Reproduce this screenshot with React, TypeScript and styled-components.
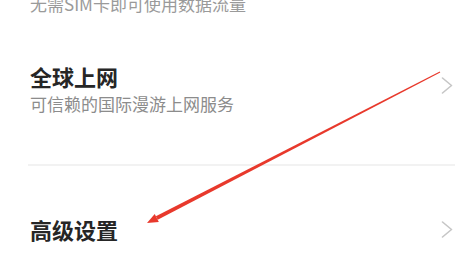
import React from "react";
import styled, { createGlobalStyle } from "styled-components";

const GlobalStyle = createGlobalStyle`
  html, body {
    margin: 0;
    padding: 0;
    background: #ffffff;
  }
  body {
    font-family: "Noto Sans CJK SC", "Noto Sans", sans-serif;
  }
`;

const Screen = styled.div`
  position: relative;
  width: 466px;
  height: 261px;
  overflow: hidden;
  background: #ffffff;
`;

const List = styled.div`
  display: flex;
  flex-direction: column;
`;

const TopDesc = styled.p`
  margin: -7px 0 0 30px;
  font-size: 17px;
  line-height: 22px;
  color: #9a9a9a;
`;

const Row = styled.div<{ $pad: string }>`
  display: flex;
  align-items: center;
  justify-content: space-between;
  padding: ${(p) => p.$pad};
  padding-left: 30px;
  padding-right: 13px;
`;

const Texts = styled.div`
  display: flex;
  flex-direction: column;
  gap: 2px;
`;

const Title = styled.div`
  font-size: 22px;
  line-height: 30px;
  font-weight: 700;
  color: #262626;
`;

const Subtitle = styled.div`
  font-size: 17px;
  line-height: 22px;
  color: #8c8c8c;
`;

const Divider = styled.div`
  height: 2px;
  margin: 0 11px 0 28px;
  background: #f2f2f2;
`;

const ChevronIcon = styled.svg<{ $shift: number }>`
  display: block;
  flex: none;
  margin-top: ${(p) => p.$shift}px;
`;

const Chevron = ({ shift = 0 }: { shift?: number }) => (
  <ChevronIcon $shift={shift} width="12" height="17" viewBox="0 0 12 17">
    <polyline
      points="1.5,1 10.5,8.5 1.5,16"
      fill="none"
      stroke="#c6c6c6"
      strokeWidth="1.6"
      strokeLinecap="round"
      strokeLinejoin="round"
    />
  </ChevronIcon>
);

const ArrowLayer = styled.svg`
  position: absolute;
  left: 0;
  top: 0;
  pointer-events: none;
`;

// annotation arrow drawn over the list
const Arrow = () => {
  const start = { x: 440, y: 72 };
  const tip = { x: 147, y: 223 };
  const dx = tip.x - start.x;
  const dy = tip.y - start.y;
  const len = Math.hypot(dx, dy);
  const u = { x: dx / len, y: dy / len };
  const n = { x: -u.y, y: u.x };
  const headLen = 11;
  const base = { x: tip.x - u.x * headLen, y: tip.y - u.y * headLen };
  const pt = (p: { x: number; y: number }, w: number) =>
    `${(p.x + n.x * w).toFixed(2)},${(p.y + n.y * w).toFixed(2)}`;
  const shaft = [pt(start, 0.5), pt(base, 2), pt(base, -2), pt(start, -0.5)].join(" ");
  const head = [pt(base, 4.5), `${tip.x},${tip.y}`, pt(base, -4.5)].join(" ");
  return (
    <ArrowLayer width="466" height="261" viewBox="0 0 466 261">
      <polygon points={shaft} fill="#e8392c" />
      <polygon points={head} fill="#e8392c" />
    </ArrowLayer>
  );
};

const App = () => {
  return (
    <Screen>
      <GlobalStyle />
      <List>
        <TopDesc>无需SIM卡即可使用数据流量</TopDesc>
        <Row $pad="46px 0 49px">
          <Texts>
            <Title>全球上网</Title>
            <Subtitle>可信赖的国际漫游上网服务</Subtitle>
          </Texts>
          <Chevron shift={-5} />
        </Row>
        <Divider />
        <Row $pad="48px 0 0">
          <Texts>
            <Title>高级设置</Title>
          </Texts>
          <Chevron />
        </Row>
      </List>
      <Arrow />
    </Screen>
  );
};

export default App;
